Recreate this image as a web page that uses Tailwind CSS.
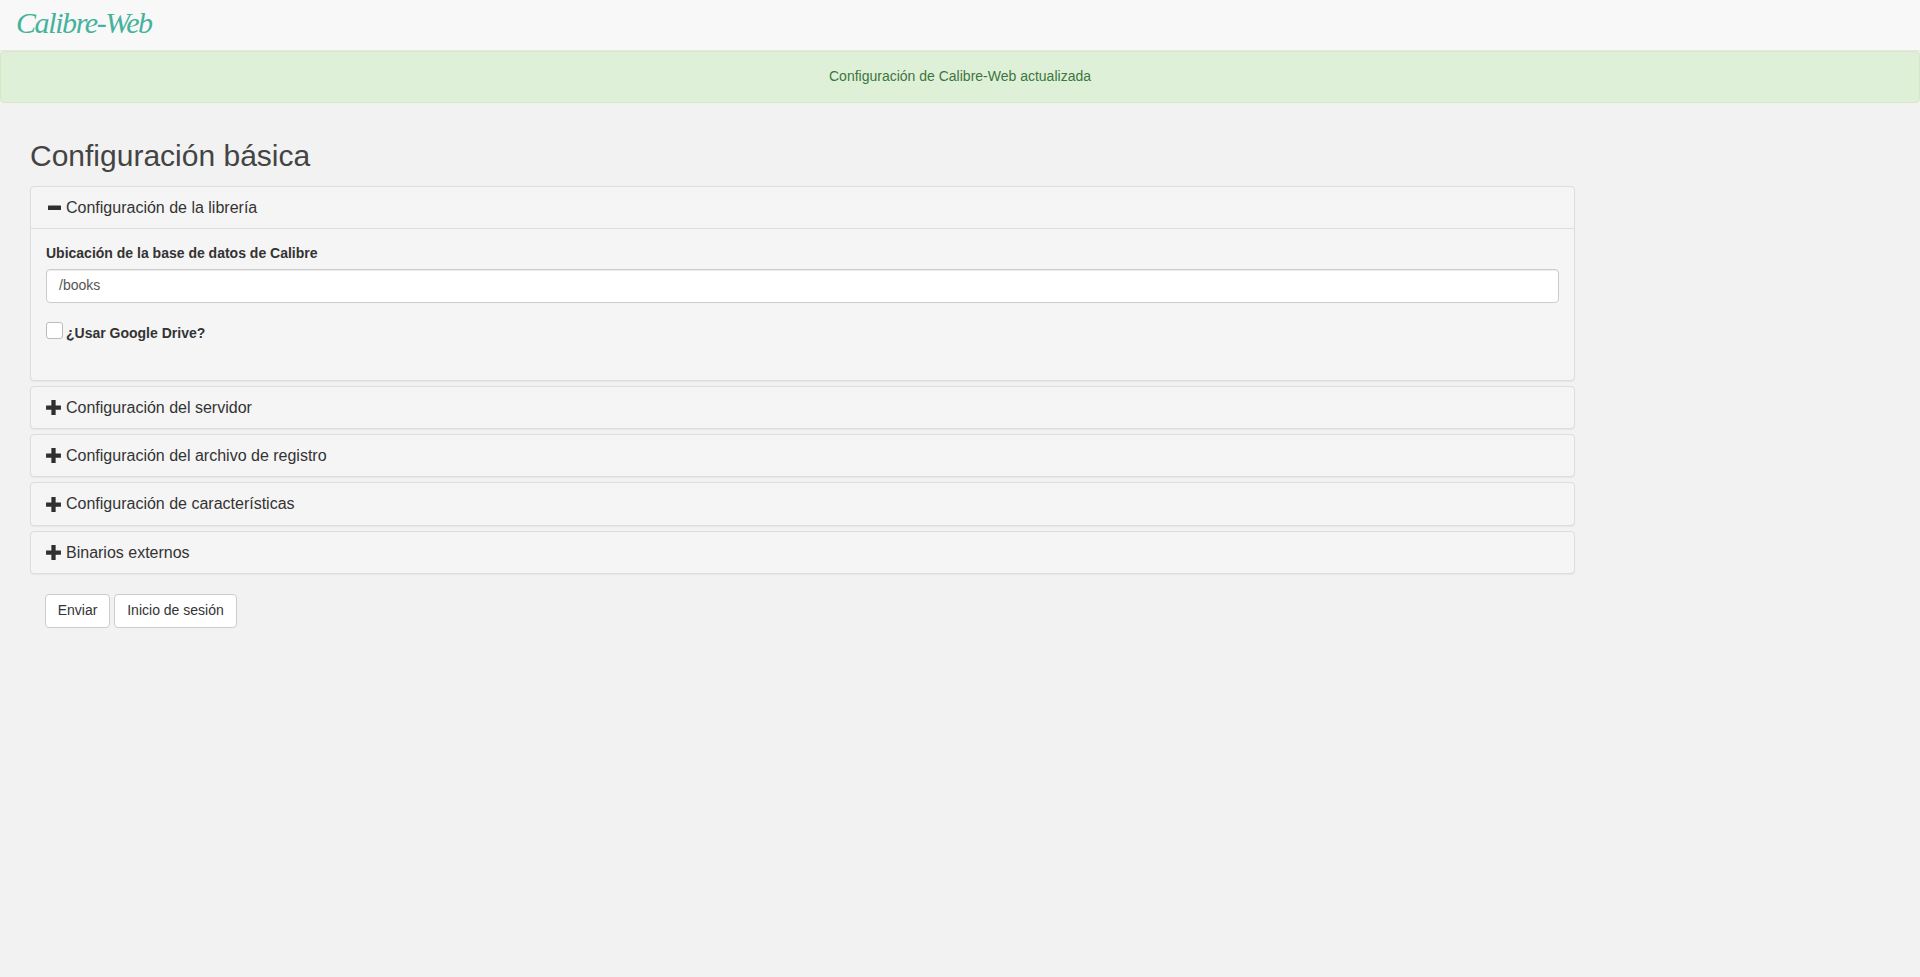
<!DOCTYPE html>
<html lang="es">
<head>
    <meta charset="UTF-8">
    <title>Calibre-Web | Configuración básica</title>
    <script src="https://cdn.jsdelivr.net/npm/@tailwindcss/browser@4"></script>
</head>
<body class="bg-[#f2f2f2] h-[977px] overflow-hidden font-['Liberation_Sans',Arial,sans-serif] text-[14px] text-[#333]">
    <!-- Navbar -->
    <nav class="h-[51px] bg-[#f8f8f8] border-b border-[#e7e7e7] pl-[16px] flex items-center">
        <a href="/" class="text-[30px] leading-none italic text-[#45b29d] font-['Liberation_Serif',serif] tracking-[-1.4px] pb-[4px]">Calibre-Web</a>
    </nav>

    <!-- Flash message -->
    <div class="h-[52px] pb-[2px] bg-[#dff0d8] border border-[#d6e9c6] rounded-[4px] text-[#3c763d] flex items-center justify-center">
        Configuración de Calibre-Web actualizada
    </div>

    <main class="pl-[30px] w-[1575px]">
        <h2 class="text-[30px] leading-[33px] mt-[36px] mb-[14px] text-[#444]">Configuración básica</h2>

        <div class="flex flex-col gap-[5px]">
            <!-- Open panel -->
            <section class="h-[195px] bg-[#f5f5f5] border border-[#ddd] rounded-[4px] shadow-[0_1px_1px_rgba(0,0,0,0.05)]">
                <header class="h-[42px] border-b border-[#ddd] flex items-center pl-[15px] text-[16px]">
                    <svg class="w-[13px] h-[6px] mr-[5px] ml-[2px]" viewBox="0 0 13 6"><rect y="0.5" width="13" height="4.5" rx="0.5" fill="#2f2f2f"/></svg>
                    Configuración de la librería
                </header>
                <div class="px-[15px] pt-[14px]">
                    <label class="block font-bold leading-[20px] mb-[6px]">Ubicación de la base de datos de Calibre</label>
                    <input type="text" value="/books" class="w-full h-[34px] bg-white border border-[#ccc] rounded-[4px] px-[12px] pb-[2px] text-[#555] shadow-[inset_0_1px_1px_rgba(0,0,0,0.075)]">
                    <div class="flex items-start mt-[19px]">
                        <span class="w-[17px] h-[17px] bg-white border border-[#bbb] rounded-[3px] mr-[3px]"></span>
                        <label class="font-bold leading-[20px] mt-[1px]">¿Usar Google Drive?</label>
                    </div>
                </div>
            </section>

            <section class="h-[43px] bg-[#f5f5f5] border border-[#ddd] rounded-[4px] shadow-[0_1px_1px_rgba(0,0,0,0.05)] flex items-center pl-[14px] text-[16px]">
                <svg class="w-[17px] h-[17px] mr-[4px]" viewBox="0 0 16 16"><path d="M6 1h4v5h5v4h-5v5H6v-5H1V6h5z" fill="#2f2f2f"/></svg>
                Configuración del servidor
            </section>
            <section class="h-[43px] bg-[#f5f5f5] border border-[#ddd] rounded-[4px] shadow-[0_1px_1px_rgba(0,0,0,0.05)] flex items-center pl-[14px] text-[16px]">
                <svg class="w-[17px] h-[17px] mr-[4px]" viewBox="0 0 16 16"><path d="M6 1h4v5h5v4h-5v5H6v-5H1V6h5z" fill="#2f2f2f"/></svg>
                Configuración del archivo de registro
            </section>
            <section class="h-[44px] bg-[#f5f5f5] border border-[#ddd] rounded-[4px] shadow-[0_1px_1px_rgba(0,0,0,0.05)] flex items-center pl-[14px] text-[16px]">
                <svg class="w-[17px] h-[17px] mr-[4px]" viewBox="0 0 16 16"><path d="M6 1h4v5h5v4h-5v5H6v-5H1V6h5z" fill="#2f2f2f"/></svg>
                Configuración de características
            </section>
            <section class="h-[43px] bg-[#f5f5f5] border border-[#ddd] rounded-[4px] shadow-[0_1px_1px_rgba(0,0,0,0.05)] flex items-center pl-[14px] text-[16px]">
                <svg class="w-[17px] h-[17px] mr-[4px]" viewBox="0 0 16 16"><path d="M6 1h4v5h5v4h-5v5H6v-5H1V6h5z" fill="#2f2f2f"/></svg>
                Binarios externos
            </section>
        </div>

        <!-- Actions -->
        <div class="flex gap-[4px] pl-[15px] mt-[20px]">
            <button class="h-[34px] w-[65px] pb-[1px] bg-white border border-[#ccc] rounded-[4px]">Enviar</button>
            <button class="h-[34px] w-[123px] pb-[1px] bg-white border border-[#ccc] rounded-[4px]">Inicio de sesión</button>
        </div>
    </main>
</body>
</html>
